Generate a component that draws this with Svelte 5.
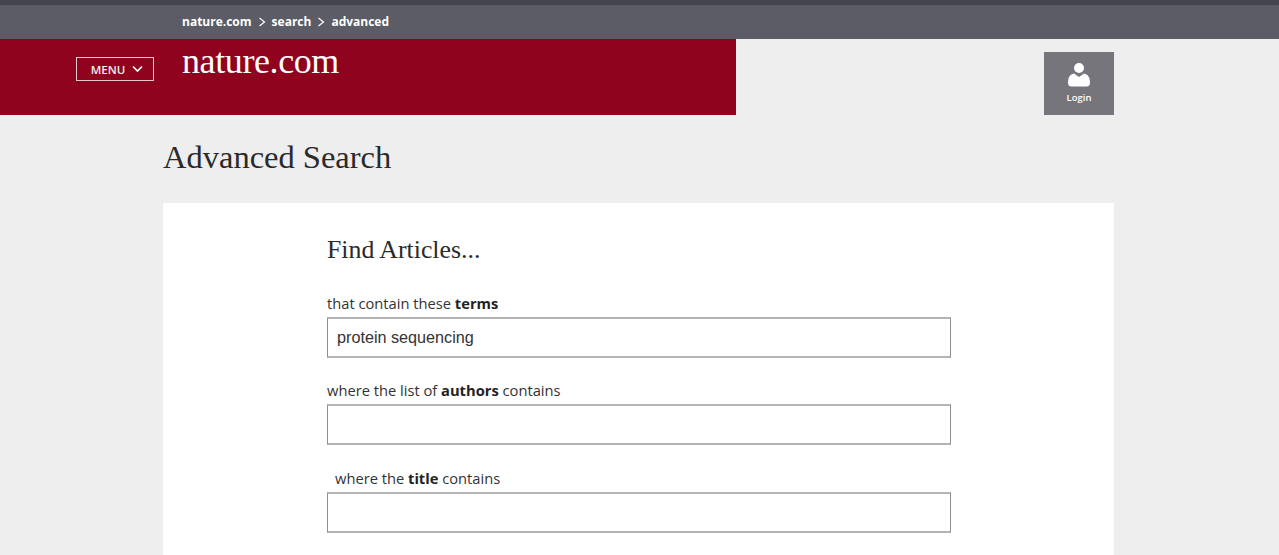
<script>
	const fields = [
		{ before: 'that contain these ', strong: 'terms', after: '', value: 'protein sequencing', indent: false },
		{ before: 'where the list of ', strong: 'authors', after: ' contains', value: '', indent: false },
		{ before: 'where the ', strong: 'title', after: ' contains', value: '', indent: true }
	];
</script>

<div class="page">
	<div class="crumbs">
		<span>nature.com</span>
		<svg class="sep" width="8" height="10" viewBox="0 0 8 10"><path d="M1.5 1l5 4-5 4" fill="none" stroke="#fff" stroke-width="1.2" /></svg>
		<span>search</span>
		<svg class="sep" width="8" height="10" viewBox="0 0 8 10"><path d="M1.5 1l5 4-5 4" fill="none" stroke="#fff" stroke-width="1.2" /></svg>
		<span>advanced</span>
	</div>

	<header class="header">
		<div class="brand">
			<button type="button" class="menu">
				MENU
				<svg width="11" height="8" viewBox="0 0 11 8"><path d="M1 1.5l4.5 4.5L10 1.5" fill="none" stroke="#fff" stroke-width="1.6" /></svg>
			</button>
			<div class="logo">nature.com</div>
		</div>
		<div class="login">
			<svg width="24" height="26" viewBox="0 0 24 26">
				<circle cx="12" cy="6" r="5" fill="#fff" />
				<path d="M1 21c0-6 2-8.500 6-9.500l5 3.500 5-3.500c4 1 6 3.500 6 9.500 0 2.500-1.500 3.500-3.500 3.500h-15C2.500 24.500 1 23.500 1 21z" fill="#fff" />
			</svg>
			<span>Login</span>
		</div>
	</header>

	<main class="main">
		<h1>Advanced Search</h1>
		<section class="card">
			<h2>Find Articles...</h2>
			{#each fields as f}
				<label class="field">
					<span class="label" class:indent={f.indent}>{f.before}<b>{f.strong}</b>{f.after}</span>
					<input type="text" value={f.value} />
				</label>
			{/each}
		</section>
	</main>
</div>

<style>
	:global(html), :global(body) {
		overflow: hidden;
	}
	.page {
		height: 555px;
		overflow: hidden;
		background: #eee;
		font-family: "Open Sans", "Noto Sans", sans-serif;
	}
	.crumbs {
		height: 32px;
		border-top: 5px solid #45454f;
		background: #5b5c66;
		padding-left: 182px;
		padding-bottom: 2px;
		display: flex;
		align-items: center;
		gap: 6px;
		color: #fff;
		font-size: 12px;
		font-weight: 700;
	}
	.sep {
		margin-top: 1px;
	}
	.header {
		height: 76px;
		display: flex;
		justify-content: space-between;
	}
	.brand {
		width: 736px;
		box-sizing: border-box;
		background: #8f031f;
		padding-left: 76px;
		display: flex;
		align-items: flex-start;
	}
	.menu {
		margin-top: 18px;
		width: 78px;
		height: 24px;
		box-sizing: border-box;
		border: 1px solid #e6c5cc;
		background: none;
		color: #f1f1f1;
		font: 600 11.5px "Open Sans", sans-serif;
		display: flex;
		align-items: center;
		justify-content: center;
		gap: 7px;
		padding: 0 0 0 4px;
	}
	.logo {
		margin: 2px 0 0 28px;
		color: #fff;
		font: 36px/40px "Liberation Serif", serif;
		letter-spacing: -0.4px;
	}
	.login {
		margin: 13px 165px 0 0;
		width: 70px;
		height: 63px;
		background: #76757c;
		color: #fff;
		display: flex;
		flex-direction: column;
		align-items: center;
		padding-top: 10px;
		box-sizing: border-box;
		gap: 3px;
		font-size: 9.5px;
		font-weight: 600;
	}
	.main {
		padding-left: 163px;
		width: 951px;
	}
	h1 {
		margin: 0;
		padding-top: 23px;
		height: 65px;
		font: 400 32.5px/38px "Liberation Serif", serif;
		color: #2a2a2a;
	}
	.card {
		background: #fff;
		padding: 30px 0 0 164px;
		height: 400px;
	}
	h2 {
		margin: 0 0 26px;
		font: 400 25.8px/34px "Liberation Serif", serif;
		color: #2a2a2a;
	}
	.field {
		display: block;
		width: 624px;
		margin-bottom: 22.3px;
	}
	.label {
		display: block;
		height: 24px;
		line-height: 20px;
		font-size: 14.7px;
		color: #333;
	}
	.indent {
		padding-left: 8px;
	}
	b {
		color: #222;
	}
	input {
		display: block;
		width: 100%;
		height: 41px;
		box-sizing: border-box;
		border: 1px solid #8f8f8f;
		border-top: 2px solid #b4b4b4;
		border-bottom: 2px solid #b4b4b4;
		background: #fff;
		padding: 0 9px;
		margin: 0;
		outline: 0;
		font: 16.2px "Liberation Sans", sans-serif;
		color: #333;
	}
</style>
